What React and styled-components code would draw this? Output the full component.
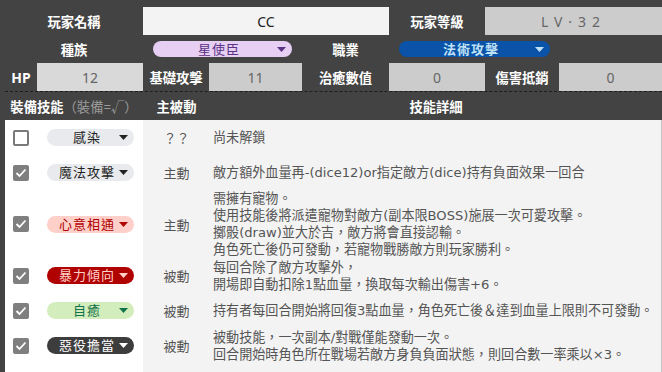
import React from "react";
import styled, { createGlobalStyle } from "styled-components";

const Global = createGlobalStyle`
  html, body { margin: 0; padding: 0; background: #434343; }
  body { font-family: "Noto Sans", "Noto Sans CJK TC", sans-serif; overflow: hidden; }
  * { box-sizing: border-box; }
`;

const Page = styled.div`
  width: 662px;
  height: 372px;
  background: #434343;
  padding: 7px 0 0 5px;
  overflow: hidden;
`;

const Top = styled.div`
  display: grid;
  grid-template-columns: 32px 106px 66px 93px 87px 96px 74px 103px;
  grid-auto-rows: 28px;
`;

const Label = styled.div`
  grid-column: ${(p) => p.$col};
  display: flex;
  align-items: center;
  justify-content: center;
  color: #fff;
  font-weight: 700;
  font-size: ${(p) => (p.$big ? "14px" : "13.3px")};
`;

const Field = styled.div`
  grid-column: ${(p) => p.$col};
  display: flex;
  align-items: center;
  justify-content: center;
  background: ${(p) => p.$bg};
  color: ${(p) => p.$fg || "#666"};
  font-size: 14px;
  letter-spacing: ${(p) => p.$ls || "0"};
`;

const PillCell = styled.div`
  grid-column: ${(p) => p.$col};
  display: flex;
  align-items: center;
  padding: 0 ${(p) => p.$pr || "10px"} 0 10px;
`;

const Chip = styled.div`
  display: flex;
  align-items: center;
  width: ${(p) => p.$w || "100%"};
  height: ${(p) => p.$h || "16px"};
  border-radius: 9px;
  background: ${(p) => p.$bg};
  color: ${(p) => p.$fg};
  font-size: 13px;
  font-weight: ${(p) => (p.$bold ? 700 : 400)};
  padding: 0 6px 0 8px;
  line-height: 1;
`;

const ChipText = styled.span`
  flex: 1;
  text-align: center;
  letter-spacing: 1px;
`;

const Arrow = ({ color }) => (
  <svg width="9" height="5" viewBox="0 0 9 5">
    <polygon points="0,0 9,0 4.5,5" fill={color} />
  </svg>
);

const Dashed = styled.div`
  border-top: 1px dashed #1e1e1e;
  height: 1px;
`;

const Head = styled.div`
  display: grid;
  grid-template-columns: 138px 67px 1fr;
  height: 28px;
  align-items: center;
  color: #fff;
  font-weight: 700;
  font-size: 13.3px;
  text-align: center;
`;

const Muted = styled.span`
  color: #9a9a9a;
  font-weight: 400;
`;

const Body = styled.div`
  display: grid;
  grid-template-columns: 138px 67px 1fr;
  background: linear-gradient(to right, #ffffff 138px, #f3f3f3 138px);
  border-right: 1px solid #c4c4c4;
  padding-bottom: 20px;
`;

const SkillCell = styled.div`
  display: flex;
  align-items: center;
  min-height: 35px;
  padding-left: 8px;
  gap: 18px;
`;

const Check = styled.div`
  width: 16px;
  height: 16px;
  border-radius: 2px;
  flex: none;
  display: flex;
  align-items: center;
  justify-content: center;
  background: ${(p) => (p.$on ? "#7f7f7f" : "#fff")};
  border: ${(p) => (p.$on ? "none" : "2px solid #7a7a7a")};
`;

const TypeCell = styled.div`
  display: flex;
  align-items: center;
  justify-content: center;
  color: #555;
  font-size: 13px;
  min-height: 35px;
`;

const Detail = styled.div`
  display: flex;
  flex-direction: column;
  justify-content: center;
  padding-left: 3px;
  color: #555;
  font-family: "DejaVu Sans", "Noto Sans CJK TC", sans-serif;
  font-size: 13.1px;
  line-height: 17px;
  min-height: 35px;
`;

const skills = [
  { on: false, name: "感染", bg: "#e8eaed", fg: "#222", type: "？？", lines: ["尚未解鎖"] },
  { on: true, name: "魔法攻擊", bg: "#e8eaed", fg: "#222", type: "主動", lines: ["敵方額外血量再-(dice12)or指定敵方(dice)持有負面效果一回合"] },
  {
    on: true, name: "心意相通", bg: "#ffcfc9", fg: "#b10202", type: "主動",
    lines: [
      "需擁有寵物。",
      "使用技能後將派遣寵物對敵方(副本限BOSS)施展一次可愛攻擊。",
      "擲骰(draw)並大於吉，敵方將會直接認輸。",
      "角色死亡後仍可發動，若寵物戰勝敵方則玩家勝利。",
    ],
  },
  {
    on: true, name: "暴力傾向", bg: "#b10202", fg: "#ffcfc9", type: "被動",
    lines: ["每回合除了敵方攻擊外，", "開場即自動扣除1點血量，換取每次輸出傷害+6。"],
  },
  { on: true, name: "自癒", bg: "#d4edbc", fg: "#11734b", type: "被動", lines: ["持有者每回合開始將回復3點血量，角色死亡後＆達到血量上限則不可發動。"] },
  {
    on: true, name: "惡役擔當", bg: "#3d3d3d", fg: "#ffffff", type: "被動",
    lines: ["被動技能，一次副本/對戰僅能發動一次。", "回合開始時角色所在戰場若敵方身負負面狀態，則回合數一率乘以×3。"],
  },
];

const Tick = () => (
  <svg width="12" height="10" viewBox="0 0 12 10">
    <polyline points="1.5,5 4.5,8 10.5,1.5" fill="none" stroke="#fff" strokeWidth="1.8" />
  </svg>
);

export default function App() {
  return (
    <Page>
      <Global />
      <Top>
        <Label $col="1 / 3">玩家名稱</Label>
        <Field $col="3 / 6" $bg="#f3f3f3" $fg="#222">CC</Field>
        <Label $col="6 / 7">玩家等級</Label>
        <Field $col="7 / 9" $bg="#cccccc" $fg="#666" $ls="6px">LV·32</Field>

        <Label $col="1 / 3">種族</Label>
        <PillCell $col="3 / 5">
          <Chip $bg="#e6cff2" $fg="#5a3286">
            <ChipText>星使臣</ChipText>
            <Arrow color="#5a3286" />
          </Chip>
        </PillCell>
        <Label $col="5 / 6">職業</Label>
        <PillCell $col="6 / 8" $pr="9px">
          <Chip $bg="#0a53a8" $fg="#bfe1f6" $bold>
            <ChipText>法術攻擊</ChipText>
            <Arrow color="#bfe1f6" />
          </Chip>
        </PillCell>

        <Label $col="1 / 2" $big>HP</Label>
        <Field $col="2 / 3" $bg="#d9d9d9">12</Field>
        <Label $col="3 / 4">基礎攻擊</Label>
        <Field $col="4 / 5" $bg="#cccccc">11</Field>
        <Label $col="5 / 6">治癒數值</Label>
        <Field $col="6 / 7" $bg="#cccccc">0</Field>
        <Label $col="7 / 8">傷害抵銷</Label>
        <Field $col="8 / 9" $bg="#cccccc">0</Field>
      </Top>
      <Dashed />
      <Head>
        <div>
          裝備技能<Muted>（裝備=√）</Muted>
        </div>
        <div>主被動</div>
        <div>技能詳細</div>
      </Head>
      <Body>
        {skills.map((s) => (
          <React.Fragment key={s.name}>
            <SkillCell>
              <Check $on={s.on}>{s.on && <Tick />}</Check>
              <Chip $w="87px" $h="17px" $bg={s.bg} $fg={s.fg}>
                <ChipText>{s.name}</ChipText>
                <Arrow color={s.fg} />
              </Chip>
            </SkillCell>
            <TypeCell>{s.type}</TypeCell>
            <Detail>
              {s.lines.map((l) => (
                <div key={l}>{l}</div>
              ))}
            </Detail>
          </React.Fragment>
        ))}
      </Body>
    </Page>
  );
}
